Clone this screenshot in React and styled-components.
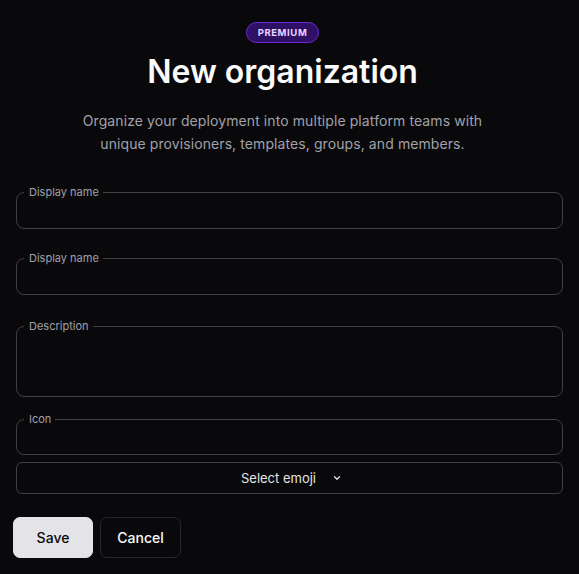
import React from "react";
import styled, { createGlobalStyle } from "styled-components";

const GlobalStyle = createGlobalStyle`
  html, body {
    margin: 0;
    padding: 0;
    background: #09090b;
  }
  body {
    font-family: Inter, "Noto Sans", sans-serif;
    color: #fafafa;
  }
`;

const Page = styled.div`
  width: 579px;
  height: 574px;
  box-sizing: border-box;
  padding: 22px 13px 0;
  display: flex;
  flex-direction: column;
`;

const Header = styled.header`
  display: flex;
  flex-direction: column;
  align-items: center;
  padding-right: 14px;
`;

const Badge = styled.span`
  box-sizing: border-box;
  height: 21px;
  padding: 0 11px;
  display: inline-flex;
  align-items: center;
  border-radius: 999px;
  background: #2e1065;
  border: 1px solid #6d28d9;
  color: #e9d5ff;
  font-size: 9.5px;
  font-weight: 700;
  letter-spacing: 0.6px;
`;

const Title = styled.h1`
  margin: 9px 0 0;
  font-size: 32px;
  line-height: 40px;
  font-weight: 600;
  letter-spacing: 0;
  color: #fafafa;
`;

const Lead = styled.p`
  margin: 17px 0 0;
  width: 430px;
  text-align: center;
  font-size: 14px;
  line-height: 23px;
  letter-spacing: 0.09px;
  color: #a1a1aa;
`;

const Form = styled.form`
  margin-top: 30px;
  display: flex;
  flex-direction: column;
`;

const Field = styled.fieldset`
  margin: ${(p) => p.$gap || 0}px 3px 0;
  padding: 0;
  min-width: 0;
  border: 1px solid #3f3f46;
  border-radius: 8px;
`;

const Legend = styled.legend`
  margin-left: 7px;
  padding: 0 4px 0 5px;
  font-size: 11px;
  line-height: 14px;
  color: #a1a1aa;
`;

const Input = styled.div`
  height: ${(p) => p.$h}px;
`;

const SelectButton = styled.button`
  margin: 7px 3px 0;
  height: 32px;
  box-sizing: border-box;
  border: 1px solid #3f3f46;
  border-radius: 6px;
  background: transparent;
  color: #e4e4e7;
  font-family: inherit;
  font-size: 13px;
  font-weight: 400;
  display: flex;
  align-items: center;
  justify-content: center;
  gap: 16px;
  padding: 0 0 0 4px;
`;

const Actions = styled.div`
  margin-top: 23px;
  display: flex;
  gap: 7px;
`;

const Button = styled.button`
  height: 41px;
  box-sizing: border-box;
  padding: 0;
  width: ${(p) => p.$w}px;
  border-radius: 7px;
  font-family: inherit;
  font-size: 14px;
  font-weight: 500;
  border: 1px solid ${(p) => (p.$primary ? "#e4e4e7" : "#27272a")};
  background: ${(p) => (p.$primary ? "#e4e4e7" : "transparent")};
  color: ${(p) => (p.$primary ? "#09090b" : "#fafafa")};
`;

const Chevron = () => (
  <svg width="10" height="10" viewBox="0 0 24 24" fill="none" stroke="#e4e4e7" strokeWidth="3" strokeLinecap="round" strokeLinejoin="round">
    <path d="m6 9 6 6 6-6" />
  </svg>
);

const fields = [
  { label: "Display name", h: 29, gap: 0 },
  { label: "Display name", h: 29, gap: 22 },
  { label: "Description", h: 63, gap: 24 },
  { label: "Icon", h: 28, gap: 15 },
];

export default function App() {
  return (
    <>
      <GlobalStyle />
      <Page>
        <Header>
          <Badge>PREMIUM</Badge>
          <Title>New organization</Title>
          <Lead>
            Organize your deployment into multiple platform teams with unique
            provisioners, templates, groups, and members.
          </Lead>
        </Header>
        <Form onSubmit={(e) => e.preventDefault()}>
          {fields.map((f, i) => (
            <Field key={i} $gap={f.gap}>
              <Legend>{f.label}</Legend>
              <Input $h={f.h} />
            </Field>
          ))}
          <SelectButton type="button">
            Select emoji
            <Chevron />
          </SelectButton>
          <Actions>
            <Button $primary $w={80}>Save</Button>
            <Button $w={81}>Cancel</Button>
          </Actions>
        </Form>
      </Page>
    </>
  );
}
